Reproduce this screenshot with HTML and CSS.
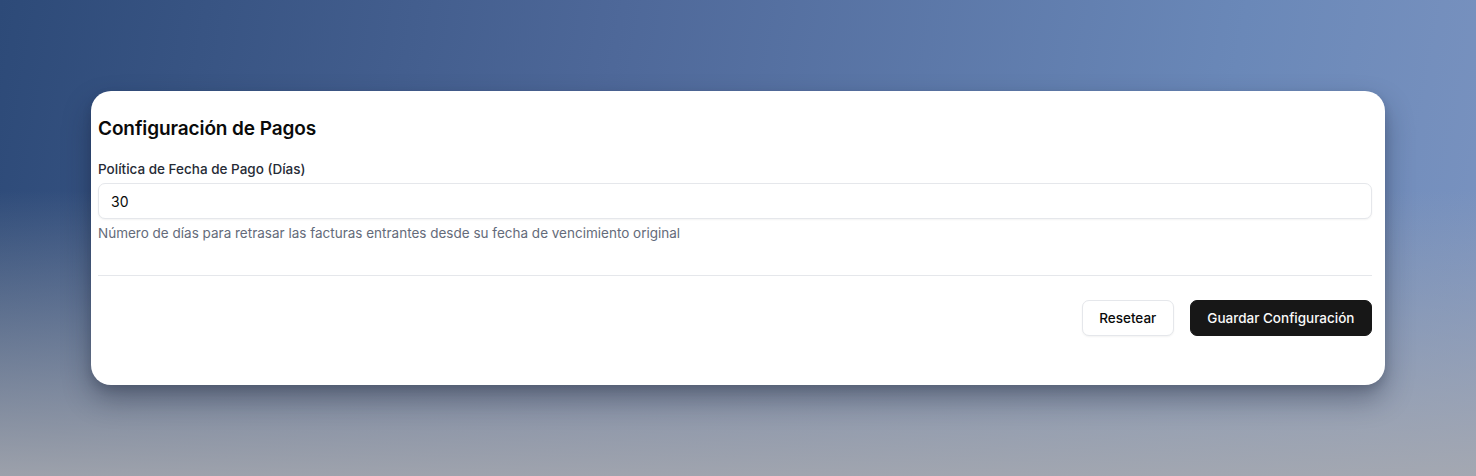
FILE: index.html
```html
<!DOCTYPE html>
<html lang="es">
<head>
<meta charset="utf-8">
<title>Configuración de Pagos</title>
<link rel="stylesheet" href="styles.css">
</head>
<body>
<div class="stage">
  <section class="card">
    <h2 class="title">Configuración de Pagos</h2>
    <div class="field">
      <label class="label" for="dias">Política de Fecha de Pago (Días)</label>
      <input class="input" id="dias" type="text" value="30">
      <p class="help">Número de días para retrasar las facturas entrantes desde su fecha de vencimiento original</p>
    </div>
    <hr class="divider">
    <div class="actions">
      <button class="btn btn-outline">Resetear</button>
      <button class="btn btn-primary">Guardar Configuración</button>
    </div>
  </section>
</div>
</body>
</html>
```
FILE: styles.css
```css
html, body {
  margin: 0;
  height: 100%;
}
body {
  font-family: Inter, "Noto Sans", "Liberation Sans", sans-serif;
  color: #0a0a0a;
  background:
    linear-gradient(180deg, rgba(168,170,176,0) 40%, rgba(168,170,176,0.9) 100%),
    linear-gradient(100deg, #2d4a78 0%, #4e6899 40%, #6a88b8 80%, #7a93c0 100%);
  overflow: hidden;
}
.stage {
  padding: 91px 91px;
  box-sizing: border-box;
  height: 476px;
}
.card {
  background: #ffffff;
  border-radius: 20px;
  padding: 24px 13px 49px 7px;
  box-shadow: 0 14px 28px rgba(20, 30, 50, 0.38), 0 4px 8px rgba(20, 30, 50, 0.15);
  box-sizing: border-box;
  height: 294px;
}
.title {
  margin: 0;
  font-size: 19px;
  line-height: 28px;
  font-weight: 600;
  letter-spacing: -0.1px;
}
.field {
  margin-top: 16px;
  display: flex;
  flex-direction: column;
}
.label {
  font-size: 13.5px;
  line-height: 20px;
  font-weight: 500;
  color: #262b36;
}
.input {
  margin-top: 4px;
  height: 36px;
  box-sizing: border-box;
  border: 1px solid #e5e7eb;
  border-radius: 7px;
  padding: 0 12px;
  font-family: inherit;
  font-size: 14px;
  color: #0a0a0a;
  background: #fff;
  box-shadow: 0 1px 2px rgba(0,0,0,0.05);
  outline: none;
}
.help {
  margin: 4px 0 0;
  font-size: 13.5px;
  line-height: 20px;
  color: #646b7a;
}
.divider {
  margin: 32px 0 0;
  border: 0;
  border-top: 1px solid #e5e7eb;
  height: 0;
}
.actions {
  margin-top: 24px;
  display: flex;
  justify-content: flex-end;
  gap: 16px;
}
.btn {
  height: 36px;
  padding: 0 16.5px;
  border-radius: 7px;
  font-family: inherit;
  font-size: 13.5px;
  font-weight: 500;
  cursor: pointer;
}
.btn-outline {
  background: #fff;
  border: 1px solid #e5e7eb;
  color: #0a0a0a;
  box-shadow: 0 1px 2px rgba(0,0,0,0.05);
}
.btn-primary {
  background: #171717;
  border: 1px solid #171717;
  color: #fafafa;
}
```
